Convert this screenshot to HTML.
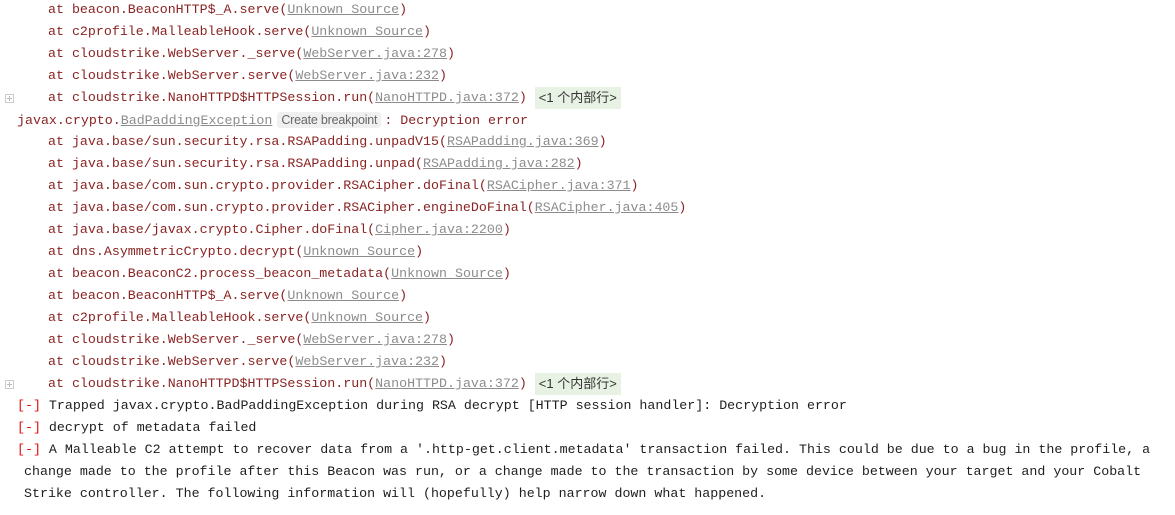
<!DOCTYPE html>
<html><head><meta charset="utf-8"><style>
body{margin:0;width:1175px;height:515px;background:#fff;overflow:hidden;position:relative;font-family:"Liberation Mono","Noto Sans CJK SC",monospace;font-size:13.3px;}
.l{position:absolute;height:22px;line-height:22px;white-space:pre;color:#8a2323;}
.u{color:#8c8c8c;text-decoration:underline;}
.k{color:#1e1e1e}
.r{color:#e01010}
.f{background:#e8f2e4;color:#333;font-family:"Liberation Sans","Noto Sans CJK SC",sans-serif;font-size:13px;padding:0 4px;display:inline-block;height:22px;line-height:22px;vertical-align:top;}
.bp{background:#f0f0f0;color:#666;font-family:"Liberation Sans",sans-serif;font-size:12.5px;padding:1px 4px;border-radius:3px;margin:0 3px 0 5px;letter-spacing:-0.2px}
.pl{position:absolute;left:5px;width:7px;height:7px;border:1px solid #ccc;font-size:0}
.pl:after{content:"";position:absolute;left:1px;top:3px;width:5px;height:1px;background:#bbb}
.pl:before{content:"";position:absolute;left:3px;top:1px;width:1px;height:5px;background:#bbb}
</style></head><body>
<div class="l" style="left:48px;top:-1px">at beacon.BeaconHTTP$_A.serve(<span class="u">Unknown Source</span>)</div>
<div class="l" style="left:48px;top:21px">at c2profile.MalleableHook.serve(<span class="u">Unknown Source</span>)</div>
<div class="l" style="left:48px;top:43px">at cloudstrike.WebServer._serve(<span class="u">WebServer.java:278</span>)</div>
<div class="l" style="left:48px;top:65px">at cloudstrike.WebServer.serve(<span class="u">WebServer.java:232</span>)</div>
<div class="pl" style="top:94px"></div>
<div class="l" style="left:48px;top:87px">at cloudstrike.NanoHTTPD$HTTPSession.run(<span class="u">NanoHTTPD.java:372</span>) <span class="f">&lt;1 个内部行&gt;</span></div>
<div class="l" style="left:17px;top:109px">javax.crypto.<span class="u">BadPaddingException</span><span class="bp">Create breakpoint</span>: Decryption error</div>
<div class="l" style="left:48px;top:131px">at java.base/sun.security.rsa.RSAPadding.unpadV15(<span class="u">RSAPadding.java:369</span>)</div>
<div class="l" style="left:48px;top:153px">at java.base/sun.security.rsa.RSAPadding.unpad(<span class="u">RSAPadding.java:282</span>)</div>
<div class="l" style="left:48px;top:175px">at java.base/com.sun.crypto.provider.RSACipher.doFinal(<span class="u">RSACipher.java:371</span>)</div>
<div class="l" style="left:48px;top:197px">at java.base/com.sun.crypto.provider.RSACipher.engineDoFinal(<span class="u">RSACipher.java:405</span>)</div>
<div class="l" style="left:48px;top:219px">at java.base/javax.crypto.Cipher.doFinal(<span class="u">Cipher.java:2200</span>)</div>
<div class="l" style="left:48px;top:241px">at dns.AsymmetricCrypto.decrypt(<span class="u">Unknown Source</span>)</div>
<div class="l" style="left:48px;top:263px">at beacon.BeaconC2.process_beacon_metadata(<span class="u">Unknown Source</span>)</div>
<div class="l" style="left:48px;top:285px">at beacon.BeaconHTTP$_A.serve(<span class="u">Unknown Source</span>)</div>
<div class="l" style="left:48px;top:307px">at c2profile.MalleableHook.serve(<span class="u">Unknown Source</span>)</div>
<div class="l" style="left:48px;top:329px">at cloudstrike.WebServer._serve(<span class="u">WebServer.java:278</span>)</div>
<div class="l" style="left:48px;top:351px">at cloudstrike.WebServer.serve(<span class="u">WebServer.java:232</span>)</div>
<div class="pl" style="top:380px"></div>
<div class="l" style="left:48px;top:373px">at cloudstrike.NanoHTTPD$HTTPSession.run(<span class="u">NanoHTTPD.java:372</span>) <span class="f">&lt;1 个内部行&gt;</span></div>
<div class="l k" style="left:17px;top:395px"><span class="r">[-]</span> Trapped javax.crypto.BadPaddingException during RSA decrypt [HTTP session handler]: Decryption error</div>
<div class="l k" style="left:17px;top:417px"><span class="r">[-]</span> decrypt of metadata failed</div>
<div class="l k" style="left:17px;top:439px"><span class="r">[-]</span> A Malleable C2 attempt to recover data from a '.http-get.client.metadata' transaction failed. This could be due to a bug in the profile, a</div>
<div class="l k" style="left:24px;top:461px">change made to the profile after this Beacon was run, or a change made to the transaction by some device between your target and your Cobalt</div>
<div class="l k" style="left:24px;top:483px">Strike controller. The following information will (hopefully) help narrow down what happened.</div>
</body></html>
